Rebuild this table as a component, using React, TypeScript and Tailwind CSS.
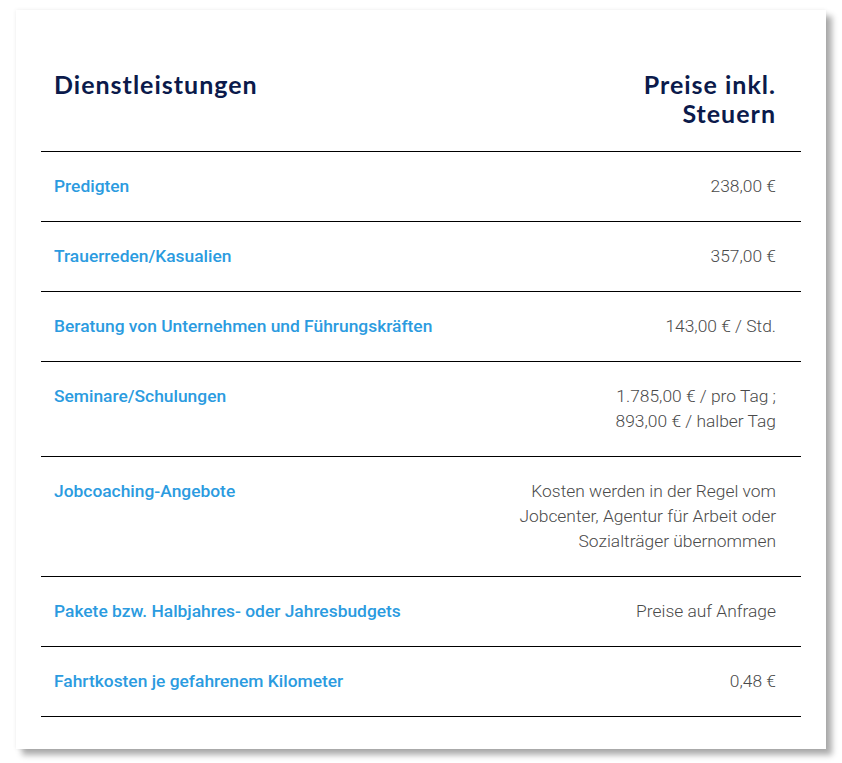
import React from 'react';

type Row = {
  label: string;
  price: string[];
};

const ROWS: Row[] = [
  { label: 'Predigten', price: ['238,00 €'] },
  { label: 'Trauerreden/Kasualien', price: ['357,00 €'] },
  { label: 'Beratung von Unternehmen und Führungskräften', price: ['143,00 € / Std.'] },
  { label: 'Seminare/Schulungen', price: ['1.785,00 € / pro Tag ;', '893,00 € / halber Tag'] },
  {
    label: 'Jobcoaching-Angebote',
    price: ['Kosten werden in der Regel vom', 'Jobcenter, Agentur für Arbeit oder', 'Sozialträger übernommen'],
  },
  { label: 'Pakete bzw. Halbjahres- oder Jahresbudgets', price: ['Preise auf Anfrage'] },
  { label: 'Fahrtkosten je gefahrenem Kilometer', price: ['0,48 €'] },
];

const PriceRow = ({ label, price }: Row) => (
  <div className="flex items-start justify-between gap-6 border-b border-black pl-[13px] pr-[25px] py-[22px] text-[17.4px] leading-[25px]">
    <span className="font-medium text-[#2b9be0]">{label}</span>
    <span className="text-right font-light text-[#4a4a4a]">
      {price.map((line, i) => (
        <React.Fragment key={i}>
          {line}
          {i < price.length - 1 && <br />}
        </React.Fragment>
      ))}
    </span>
  </div>
);

export default function App() {
  return (
    <div className="min-h-[763px] w-[842px] bg-white pl-4 pt-[10px]" style={{ fontFamily: 'Roboto, "Liberation Sans", sans-serif' }}>
      <div className="w-[810px] bg-white px-[25px] pb-8 pt-[60px] shadow-[6px_6px_6px_rgba(0,0,0,0.32),0_0_4px_rgba(0,0,0,0.08)]">
        <div className="flex items-start justify-between border-b border-black pl-[13px] pr-[25px] pb-[23px] text-[25px] font-bold leading-[29px] tracking-[1px] text-[#0b1a4b] [font-family:Lato,'Noto_Sans',sans-serif]">
          <span>Dienstleistungen</span>
          <span className="text-right">
            Preise inkl.
            <br />
            Steuern
          </span>
        </div>
        {ROWS.map(row => (
          <PriceRow key={row.label} {...row} />
        ))}
      </div>
    </div>
  );
}
